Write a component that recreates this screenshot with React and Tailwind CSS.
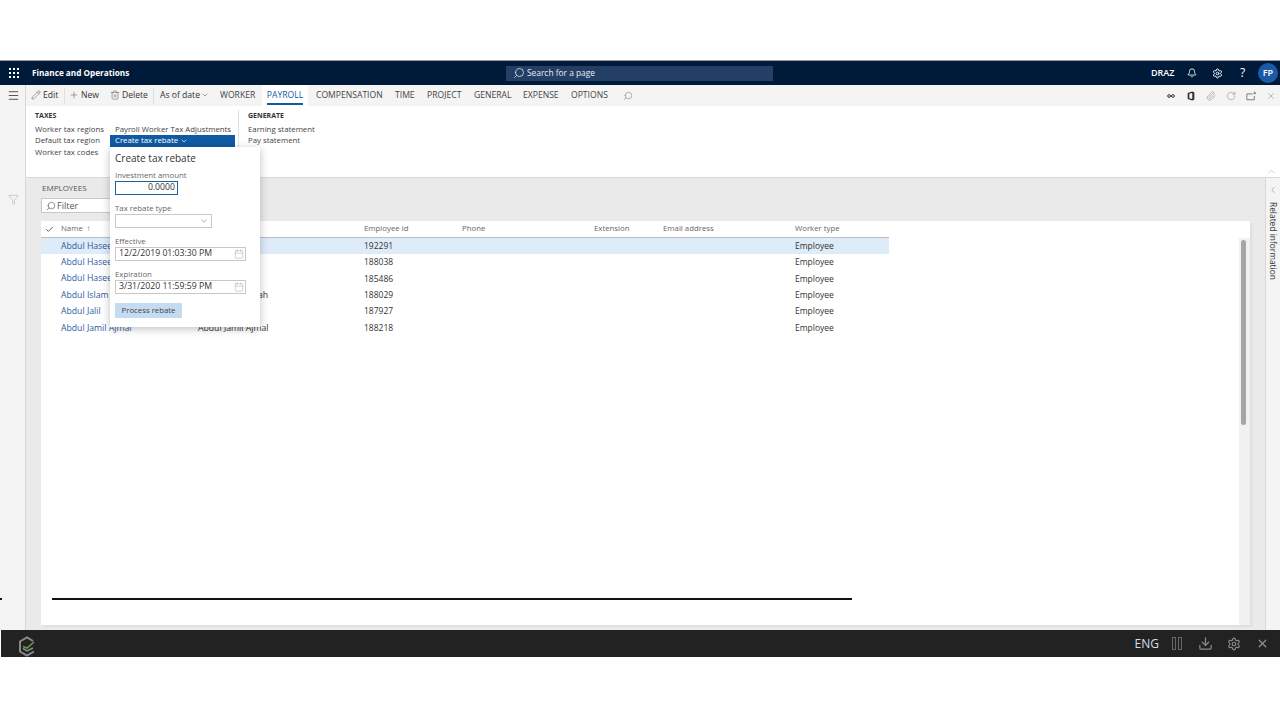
import { Bell, Calendar, Check, ChevronDown, ChevronLeft, ChevronUp, Download, Filter, Infinity as InfinityIcon, Menu, Paperclip, Pencil, Plus, RotateCw, Search, Settings, Trash2, X } from 'lucide-react'

const rows = [
  { name: 'Abdul Haseeb', other: '', id: '192291', selected: true },
  { name: 'Abdul Haseeb', other: '', id: '188038' },
  { name: 'Abdul Haseeb', other: '', id: '185486' },
  { name: 'Abdul Islam', other: 'Abdul Islam Shah', id: '188029' },
  { name: 'Abdul Jalil', other: '', id: '187927' },
  { name: 'Abdul Jamil Ajmal', other: 'Abdul Jamil Ajmal', id: '188218' },
]

const gridCols = 'grid grid-cols-[20px_137px_166px_98px_132px_69px_132px_94px] w-[848px]'

function Waffle() {
  return (
    <div className="grid w-[10px] grid-cols-3 gap-[2px]">
      {Array.from({ length: 9 }).map((_, i) => (
        <span key={i} className="h-[2px] w-[2px] bg-white" />
      ))}
    </div>
  )
}

function TopBar() {
  return (
    <div className="flex h-[24px] items-center bg-[#001a3a] text-white">
      <div className="ml-[9px] w-[23px]"><Waffle /></div>
      <span className="w-[474px] text-[8.2px] font-bold">Finance and Operations</span>
      <div className="flex h-[15px] w-[267px] items-center bg-[#243f66] pl-[7px] text-[8.4px] text-[#e8edf3]">
        <Search className="mr-[2px] h-[12px] w-[12px] -scale-x-100" strokeWidth={1.5} />
        Search for a page
      </div>
      <span className="ml-[378px] w-[36px] text-[9px] font-semibold">DRAZ</span>
      <Bell className="h-[10px] w-[10px]" strokeWidth={2} />
      <Settings className="ml-[15px] h-[11px] w-[11px]" strokeWidth={2} />
      <span className="ml-[17px] w-[8px] text-[12px]">?</span>
      <div className="ml-[10px] flex h-[20px] w-[20px] items-center justify-center rounded-full bg-[#1c5aa6] text-[9px] font-semibold">FP</div>
    </div>
  )
}

function ActionItem({ icon: Icon, label, className }) {
  return (
    <div className={`flex items-center gap-[2px] text-[8.6px] text-[#333] ${className}`}>
      <Icon className="h-[10px] w-[10px] text-[#555]" strokeWidth={1.2} />
      {label}
    </div>
  )
}

function Tab({ label, className }) {
  return <span className={`text-[8.6px] text-[#444] ${className}`}>{label}</span>
}

function ActionBar() {
  return (
    <div className="flex h-[21px] items-center bg-[#f4f4f4]">
      <ActionItem icon={Pencil} label="Edit" className="w-[38px] pl-[5px]" />
      <div className="h-[16px] w-px bg-[#e0e0e0]" />
      <ActionItem icon={Plus} label="New" className="w-[40px] pl-[4px]" />
      <ActionItem icon={Trash2} label="Delete" className="w-[48px] pl-[5px]" />
      <div className="h-[16px] w-px bg-[#e0e0e0]" />
      <div className="flex w-[66px] items-center pl-[6px] text-[8.6px] text-[#333]">
        As of date
        <ChevronDown className="ml-[1px] h-[8px] w-[8px] text-[#777]" />
      </div>
      <Tab label="WORKER" className="w-[42px]" />
      <div className="flex h-full w-[46px] items-center justify-center bg-white pt-[3px]">
        <span className="border-b-2 border-[#0f5aa3] pb-[1px] text-[8.6px] text-[#0f5aa3]">PAYROLL</span>
      </div>
      <Tab label="COMPENSATION" className="ml-[8px] w-[79px]" />
      <Tab label="TIME" className="w-[32px]" />
      <Tab label="PROJECT" className="w-[47px]" />
      <Tab label="GENERAL" className="w-[49px]" />
      <Tab label="EXPENSE" className="w-[48px]" />
      <Tab label="OPTIONS" className="w-[52px]" />
      <Search className="h-[10px] w-[10px] -scale-x-100 text-[#888]" strokeWidth={1.5} />
      <div className="ml-auto mr-[4px] flex items-center gap-[10px] text-[#666]">
        <span className="flex w-[10px] justify-center">
          <InfinityIcon className="h-[8px] w-[8px] text-[#333]" strokeWidth={3} />
        </span>
        <svg viewBox="0 0 10 12" className="h-[10px] w-[10px]"><path d="M1 2.5 6.5.5 9 1.5v9l-2.5 1L1 9.5zM3 8.6l3.5.9V2.5L3 3.4z" fill="#333" /></svg>
        <Paperclip className="h-[10px] w-[10px] text-[#999]" strokeWidth={1.5} />
        <RotateCw className="h-[10px] w-[10px]" strokeWidth={1} />
        <svg viewBox="0 0 12 10" className="h-[10px] w-[10px]" fill="none" stroke="#666"><path d="M8 2.5H1v7h9V5" /><path d="M10.5 0v3M9 1.5h3" /></svg>
        <X className="h-[10px] w-[10px]" strokeWidth={1} />
      </div>
    </div>
  )
}

function Ribbon() {
  return (
    <div className="relative h-[71px] whitespace-nowrap bg-white pl-[9px] pt-[4px] text-[7.8px] leading-[11.5px] text-[#444]">
      <div className="flex">
        <div className="w-[204px] shrink-0 border-r border-[#e0e0e0] pb-[3px]">
          <div className="mb-[2px] text-[7px] font-bold text-[#333]">TAXES</div>
          <div className="flex">
            <div className="w-[80px] shrink-0">
              <div>Worker tax regions</div>
              <div>Default tax region</div>
              <div>Worker tax codes</div>
            </div>
            <div>Payroll Worker Tax Adjustments</div>
          </div>
        </div>
        <div className="pl-[9px]">
          <div className="mb-[2px] text-[7px] font-bold text-[#333]">GENERATE</div>
          <div>Earning statement</div>
          <div>Pay statement</div>
        </div>
      </div>
      <div className="absolute right-[2px] top-[60px] text-[#999]">
        <ChevronUp className="h-[11px] w-[13px]" strokeWidth={1} />
      </div>
    </div>
  )
}

function EmployeeGrid() {
  return (
    <div className="relative h-[404px] w-[1209px] bg-white shadow-[2px_2px_2px_rgba(0,0,0,0.05)]">
      <div className={`${gridCols} h-[17px] items-center border-b border-[#bdbdbd] text-[7.8px] text-[#666]`}>
        <Check className="ml-[4px] h-[9px] w-[9px] text-[#333]" strokeWidth={2} />
        <div>Name <span className="ml-[2px]">↑</span></div>
        <div />
        <div>Employee id</div>
        <div>Phone</div>
        <div>Extension</div>
        <div>Email address</div>
        <div>Worker type</div>
      </div>
      {rows.map((row, i) => (
        <div key={i} className={`${gridCols} h-[16.4px] items-center text-[8.5px] text-[#333] ${row.selected ? 'bg-[#deebf8]' : ''}`}>
          <div />
          <div className="text-[8.7px] text-[#2d5b9f]">{row.name}</div>
          <div className="text-[8.7px]">{row.other}</div>
          <div>{row.id}</div>
          <div />
          <div />
          <div />
          <div>Employee</div>
        </div>
      ))}
      <div className="absolute bottom-0 right-0 top-[17px] w-[11px] bg-[#f1f1f1]" />
      <div className="absolute right-[4px] top-[19px] h-[185px] w-[5px] rounded-full bg-[#a6a6a6]" />
    </div>
  )
}

function Field({ label, value }) {
  return (
    <div>
      <div className="text-[7.8px] leading-[12px] text-[#666]">{label}</div>
      <div className="flex h-[14px] w-[131px] items-center justify-between border border-[#c8c8c8] pl-[3px] pr-[1px] text-[8.7px] text-[#333]">
        {value}
        <Calendar className="h-[10px] w-[10px] text-[#999]" strokeWidth={1} />
      </div>
    </div>
  )
}

function RebatePopup() {
  return (
    <div className="absolute left-[110px] top-[50px] w-[150px]">
      <div className="flex h-[12px] w-[125px] items-center gap-[2px] bg-[#0f5aa3] pl-[5px] text-[7.8px] text-white">
        Create tax rebate
        <ChevronDown className="h-[8px] w-[8px]" />
      </div>
      <div className="h-[180px] bg-white px-[5px] pt-[5px] shadow-[0_2px_8px_rgba(0,0,0,0.25)]">
        <div className="text-[10px] leading-[13px] text-[#333]">Create tax rebate</div>
        <div className="mt-[4px] text-[7.8px] leading-[12px] text-[#666]">Investment amount</div>
        <div className="flex h-[14px] w-[63px] items-center justify-end border-[1.5px] border-[#1f5f9e] pr-[2px] text-[8.7px] text-[#333]">0.0000</div>
        <div className="mt-[7px] text-[7.8px] leading-[12px] text-[#666]">Tax rebate type</div>
        <div className="flex h-[14px] w-[97px] items-center justify-end border border-[#c8c8c8] pr-[2px]">
          <ChevronDown className="h-[10px] w-[10px] text-[#666]" strokeWidth={1.2} />
        </div>
        <div className="mt-[7px]"><Field label="Effective" value="12/2/2019 01:03:30 PM" /></div>
        <div className="mt-[7px]"><Field label="Expiration" value="3/31/2020 11:59:59 PM" /></div>
        <div className="mt-[9px] flex h-[15px] w-[67px] items-center justify-center bg-[#c3dcf2] text-[7.8px] text-[#444]">Process rebate</div>
      </div>
    </div>
  )
}

function Footer() {
  return (
    <div className="ml-[1px] flex h-[27px] items-center overflow-hidden bg-[#222222]">
      <svg viewBox="0 0 18 21" className="ml-[17px] mt-[5px] h-[21px] w-[18px]" fill="none">
        <path d="M15 5 9 1.5 2 5.5v10l7 4 7-4" stroke="#8a8a8a" strokeWidth="2" />
        <path d="M5 12.5 9 15l6-3" stroke="#8a8a8a" strokeWidth="1.5" />
        <path d="M5 10.5 9 12l7-6" stroke="#5f9e45" strokeWidth="1.6" />
      </svg>
      <span className="ml-auto text-[12px] font-medium text-[#d5dde6]">ENG</span>
      <div className="ml-[13px] flex gap-[2px]">
        <span className="h-[13px] w-[4px] border border-[#666]" />
        <span className="h-[13px] w-[4px] border border-[#666]" />
      </div>
      <Download className="ml-[16px] h-[15px] w-[15px] text-[#8a8a8a]" strokeWidth={2} />
      <Settings className="ml-[14px] h-[14px] w-[14px] text-[#8a8a8a]" strokeWidth={2} />
      <X className="ml-[15px] mr-[11px] h-[13px] w-[13px] text-[#8a8a8a]" strokeWidth={2.5} />
    </div>
  )
}

export default function App() {
  return (
    <div className="relative h-[720px] w-[1280px] overflow-hidden bg-white pt-[60px] font-['Open_Sans','Liberation_Sans',sans-serif]">
      <div className="h-px bg-[#9a9a9a]" />
      <TopBar />
      <div className="relative flex h-[545px]">
        <div className="w-[26px] shrink-0 border-r border-[#d8d8d8] bg-[#f4f4f4]">
          <Menu className="ml-[7px] mt-[4px] h-[13px] w-[13px] text-[#333]" strokeWidth={1.5} />
          <Filter className="ml-[8px] mt-[92px] h-[11px] w-[11px] text-[#999]" strokeWidth={1} />
        </div>
        <div className="flex min-w-0 flex-1 flex-col">
          <ActionBar />
          <Ribbon />
          <div className="flex flex-1 border-t border-[#d8d8d8]">
            <div className="flex-1 bg-[#eaeaea] pl-[15px] pt-[4px]">
              <div className="pl-[1px] text-[8px] leading-[11px] text-[#555]">EMPLOYEES</div>
              <div className="mt-[5px] flex h-[15px] w-[82px] items-center border border-[#c8c8c8] bg-white pl-[4px] text-[9px] text-[#555]">
                <Search className="mr-[1px] h-[10px] w-[10px] -scale-x-100" strokeWidth={1.5} />
                Filter
              </div>
              <div className="mt-[8px]"><EmployeeGrid /></div>
            </div>
            <div className="w-[15px] border-l border-[#d8d8d8] bg-[#f4f4f4] pt-[7px] text-[#777]">
              <ChevronLeft className="ml-[2px] h-[10px] w-[10px]" strokeWidth={1.2} />
              <div className="ml-[2px] mt-[7px] text-[8.4px] leading-[10px] text-[#333] [writing-mode:vertical-rl]">Related information</div>
            </div>
          </div>
        </div>
        <RebatePopup />
      </div>
      <Footer />
      <div className="absolute left-[52px] top-[598px] h-[2px] w-[800px] bg-[#111]" />
      <div className="absolute left-0 top-[598px] h-[2px] w-[2px] bg-[#111]" />
    </div>
  )
}
